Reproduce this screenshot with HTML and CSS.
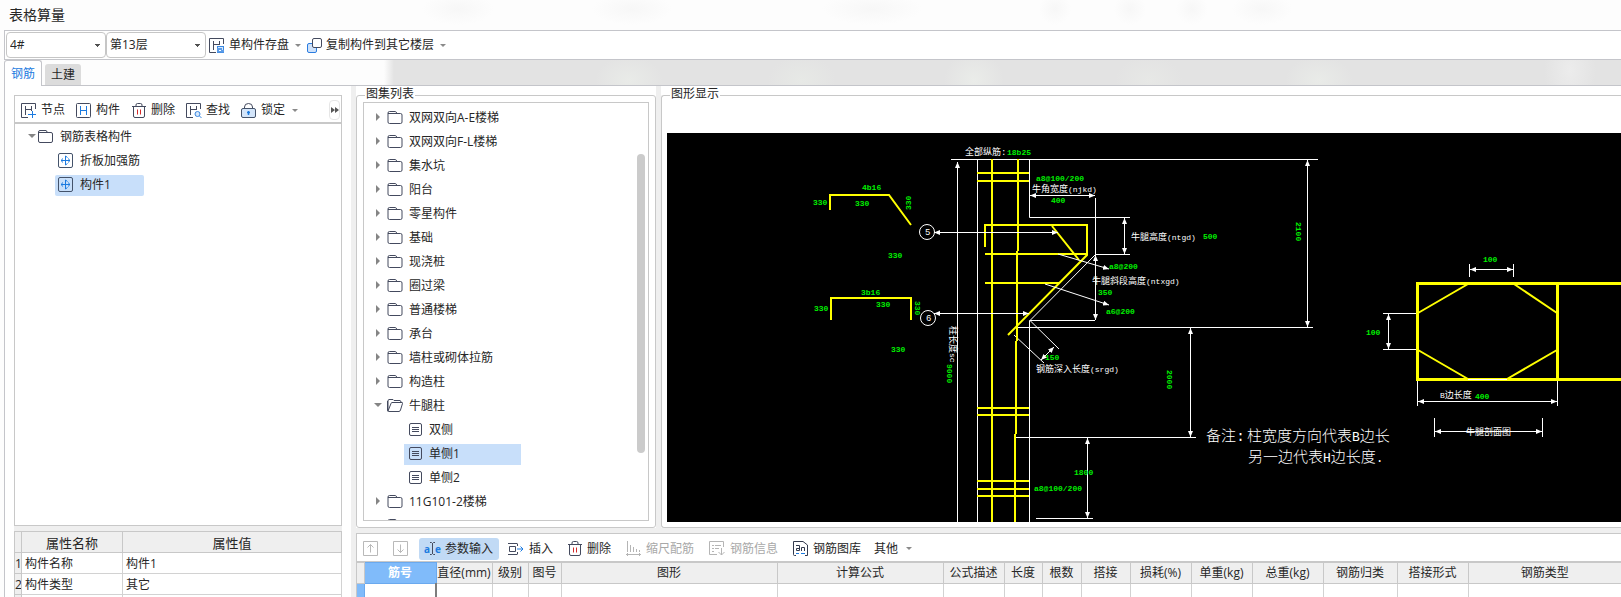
FILE: index.html
```html
<!DOCTYPE html>
<html lang="zh-CN">
<head>
<meta charset="utf-8">
<title>表格算量</title>
<link rel="stylesheet" href="styles.css">
</head>
<body>
<svg class="sprite" aria-hidden="true">
  <symbol id="i-folder" viewBox="0 0 15 13"><path d="M.5 11V2Q.5.5 2 .5H8Q9 .5 9 2.500M.5 2.500H13Q14.500 2.500 14.500 4V11Q14.500 12.500 13 12.500H2Q.5 12.500.5 11" fill="none" stroke="#444a5e"/></symbol>
  <symbol id="i-open" viewBox="0 0 16 13"><path d="M1 12V2Q1 .5 2 .5H6L7 1.500H13Q14 1.500 14 3.500M1 12 4 4.500Q4.300 3.500 5 3.500H15Q16 3.500 15.500 4.500L13.500 11Q13 12.500 12 12.500H1.500Q.5 12.500.5 11.500V2" fill="none" stroke="#444a5e"/></symbol>
  <symbol id="i-doc" viewBox="0 0 13 13"><rect x=".5" y=".5" width="12" height="12" rx="1.500" fill="none" stroke="#444a5e"/><path d="M3 4.500H10M3 6.500H10M3 8.500H10" stroke="#444a5e"/></symbol>
  <symbol id="i-part" viewBox="0 0 15 15"><rect x=".5" y=".5" width="14" height="14" rx="1.500" fill="none" stroke="#44536b"/><path d="M7.500 3V12M3 7.500H12M4.500 5.500Q2.500 7.500 4.500 9.500M10.500 5.500Q12.500 7.500 10.500 9.500M7.500 3 9.500 4.500M7.500 12 9.500 10.500" fill="none" stroke="#1c7be0"/></symbol>
  <symbol id="i-node" viewBox="0 0 16 15"><path d="M14.500 6V.5H.5V14.500H7M4.500 3V12M4.500 6.500H10.500M10.500 3V8" fill="none" stroke="#444a5e"/><path d="M7 11.500H15M11.500 8V15" stroke="#1c7be0"/></symbol>
  <symbol id="i-beam" viewBox="0 0 16 15"><rect x=".5" y=".5" width="14" height="14" rx="1" fill="none" stroke="#444a5e"/><path d="M4.500 3V12M10.500 3V12M4.500 7.500H10.500" stroke="#1c7be0"/></symbol>
  <symbol id="i-trash" viewBox="0 0 14 15"><path d="M0 3.500H14M1.500 3.500V13Q1.500 14.500 3 14.500H11Q12.500 14.500 12.500 13V3.500M4 3.500V2Q4 .5 5.500 .5H8.500Q10 .5 10 2V3.500" fill="none" stroke="#444a5e"/><path d="M5.500 6.500V11.500M8.500 6.500V11.500" stroke="#d42a2a"/></symbol>
  <symbol id="i-find" viewBox="0 0 16 15"><path d="M14.500 6V.5H.5V14.500H7M4.500 3V12M4.500 6.500H10.500M10.500 3V7" fill="none" stroke="#444a5e"/><circle cx="11.500" cy="11" r="2.500" fill="#d6e8fb" stroke="#3a87e0"/><path d="M13.500 13 15.500 15" stroke="#3a87e0"/></symbol>
  <symbol id="i-lock" viewBox="0 0 16 15"><path d="M3.500 6V4Q3.500 .5 7.500 .5T11.500 4V6" fill="none" stroke="#444a5e"/><rect x=".5" y="5.500" width="14" height="9" rx="1.500" fill="#d3e5fa" stroke="#44536b"/><path d="M7.500 8V12M6 9.500H9" stroke="#1c7be0" stroke-width="1.500"/></symbol>
  <symbol id="i-save" viewBox="0 0 16 15"><path d="M14.500 6V.5H.5V14.500H7M4.500 3V12M4.500 6.500H10.500M10.500 3V7" fill="none" stroke="#444a5e"/><rect x="8.500" y="8.500" width="6" height="6" fill="#d6e8fb" stroke="#3a87e0"/><path d="M8 14.500H15V12H13V10H8Z" fill="#5b9ce8"/><path d="M10 12.500H12" stroke="#fff"/></symbol>
  <symbol id="i-copy" viewBox="0 0 15 15"><rect x=".5" y="5.500" width="9" height="9" rx="1.500" fill="#cfe2fa" stroke="#2b7de0"/><rect x="5.500" y=".5" width="9" height="9" rx="1.500" fill="#fff" stroke="#444a5e"/></symbol>
  <symbol id="i-up" viewBox="0 0 15 15"><path d="M.5.5H14.500V14.500H.5ZM7.500 3.500V11.500M4.500 6.500 7.500 3.500 10.500 6.500" fill="none" stroke="#b9b9b9"/></symbol>
  <symbol id="i-down" viewBox="0 0 15 15"><path d="M.5.5H14.500V14.500H.5ZM7.500 3.500V11.500M4.500 8.500 7.500 11.500 10.500 8.500" fill="none" stroke="#b9b9b9"/></symbol>
  <symbol id="i-caret" viewBox="0 0 5 13"><path d="M0 .5H1.500L2.500 1.500 3.500 .5H5M0 12.500H1.500L2.500 11.500 3.500 12.500H5M2.500 1V12" fill="none" stroke="#444a5e"/></symbol>
  <symbol id="i-insert" viewBox="0 0 16 12"><path d="M0 .5H9M0 11.500H9M1.500 3.500H7.500V8.500H1.500ZM9.500 .5V3M9.500 9V11.500" fill="none" stroke="#444a5e"/><path d="M9 6H15M12.500 3.500 15 6 12.500 8.500" fill="none" stroke="#1c7be0"/></symbol>
  <symbol id="i-scale" viewBox="0 0 15 15"><path d="M1.500 0V11M4.500 4V11M7.500 6V11M10.500 8V11M13.500 9V11M0 13.500H15M1.500 12V15M13.500 12V15" stroke="#b5b5b5"/></symbol>
  <symbol id="i-info" viewBox="0 0 16 15"><path d="M14.500 6V.5H.5V13.500H8M3 4.500H5M6 4.500H12M3 7.500H5M6 7.500H10M3 10.500H5M12.500 7V14M9.500 11 12.500 14 15.500 11" fill="none" stroke="#b5b5b5"/></symbol>
  <symbol id="i-lib" viewBox="0 0 15 15"><path d="M3 14.500H1.500Q.5 14.500 .5 13.500V.5H10L14.500 4V14.500H12" fill="none" stroke="#333a4e"/><path d="M3 4.500H6.500V9.500H3.500V7.500H6.500M8.500 10V6.500H11.500V10" fill="none" stroke="#333a4e"/><path d="M3 12.500H6M8 12.500H12" stroke="#1c7be0"/></symbol>
</svg>

<header class="titlebar"><h1>表格算量</h1></header>

<div class="topbar">
  <select class="combo" aria-label="楼栋"><option>4#</option></select>
  <select class="combo" aria-label="楼层"><option>第13层</option></select>
  <button class="tool more"><svg width="16" height="15"><use href="#i-save"/></svg>单构件存盘</button>
  <button class="tool more"><svg width="15" height="15"><use href="#i-copy"/></svg>复制构件到其它楼层</button>
</div>

<nav class="tabs">
  <button class="tab active">钢筋</button>
  <button class="tab">土建</button>
</nav>

<main class="main">
  <aside class="left">
    <section class="parts">
      <div class="parts-bar">
        <button class="tool"><svg width="16" height="15"><use href="#i-node"/></svg>节点</button>
        <button class="tool"><svg width="16" height="15"><use href="#i-beam"/></svg>构件</button>
        <button class="tool"><svg width="16" height="15"><use href="#i-trash"/></svg>删除</button>
        <button class="tool"><svg width="16" height="15"><use href="#i-find"/></svg>查找</button>
        <button class="tool more"><svg width="16" height="15"><use href="#i-lock"/></svg>锁定</button>
        <button class="overflow" aria-label="更多"><svg width="8" height="6"><path d="M0 0 4 3 0 6ZM4 0 8 3 4 6Z" fill="#555"/></svg></button>
      </div>
      <ul class="tree parts-tree">
        <li><i class="arrow open"></i><svg width="15" height="13"><use href="#i-folder"/></svg>钢筋表格构件</li>
        <li class="child"><span class="node"><svg width="15" height="15"><use href="#i-part"/></svg>折板加强筋</span></li>
        <li class="child"><span class="node selected"><svg width="15" height="15"><use href="#i-part"/></svg>构件1</span></li>
      </ul>
    </section>
    <div class="props">
      <table class="grid props-grid">
        <colgroup><col class="w-num"><col class="w-name"><col></colgroup>
        <thead><tr><th></th><th>属性名称</th><th>属性值</th></tr></thead>
        <tbody>
          <tr><th>1</th><td>构件名称</td><td>构件1</td></tr>
          <tr><th>2</th><td>构件类型</td><td>其它</td></tr>
          <tr><th></th><td></td><td></td></tr>
        </tbody>
      </table>
    </div>
  </aside>

  <div class="right">
    <div class="upper">
      <section class="group atlas">
        <h2>图集列表</h2>
        <ul class="tree atlas-tree">
          <li><i class="arrow"></i><svg width="15" height="13"><use href="#i-folder"/></svg>双网双向A-E楼梯</li>
          <li><i class="arrow"></i><svg width="15" height="13"><use href="#i-folder"/></svg>双网双向F-L楼梯</li>
          <li><i class="arrow"></i><svg width="15" height="13"><use href="#i-folder"/></svg>集水坑</li>
          <li><i class="arrow"></i><svg width="15" height="13"><use href="#i-folder"/></svg>阳台</li>
          <li><i class="arrow"></i><svg width="15" height="13"><use href="#i-folder"/></svg>零星构件</li>
          <li><i class="arrow"></i><svg width="15" height="13"><use href="#i-folder"/></svg>基础</li>
          <li><i class="arrow"></i><svg width="15" height="13"><use href="#i-folder"/></svg>现浇桩</li>
          <li><i class="arrow"></i><svg width="15" height="13"><use href="#i-folder"/></svg>圈过梁</li>
          <li><i class="arrow"></i><svg width="15" height="13"><use href="#i-folder"/></svg>普通楼梯</li>
          <li><i class="arrow"></i><svg width="15" height="13"><use href="#i-folder"/></svg>承台</li>
          <li><i class="arrow"></i><svg width="15" height="13"><use href="#i-folder"/></svg>墙柱或砌体拉筋</li>
          <li><i class="arrow"></i><svg width="15" height="13"><use href="#i-folder"/></svg>构造柱</li>
          <li><i class="arrow open"></i><svg width="16" height="13"><use href="#i-open"/></svg>牛腿柱</li>
          <li class="child"><span class="node"><svg width="13" height="13"><use href="#i-doc"/></svg>双侧</span></li>
          <li class="child"><span class="node selected"><svg width="13" height="13"><use href="#i-doc"/></svg>单侧1</span></li>
          <li class="child"><span class="node"><svg width="13" height="13"><use href="#i-doc"/></svg>单侧2</span></li>
          <li><i class="arrow"></i><svg width="15" height="13"><use href="#i-folder"/></svg>11G101-2楼梯</li>
          <li><i class="arrow"></i><svg width="15" height="13"><use href="#i-folder"/></svg></li>
        </ul>
        <div class="thumb"></div>
      </section>

      <section class="group view">
        <h2>图形显示</h2>
        <div class="canvas">
          <svg class="drawing" width="100%" height="100%">
            <defs>
              <marker id="a" viewBox="0 0 6 5" refX="6" refY="2.500" markerWidth="6" markerHeight="5" markerUnits="userSpaceOnUse" orient="auto-start-reverse"><path d="M0 0 6 2.500 0 5Z" fill="#fff"/></marker>
            </defs>
            <g transform="translate(-667 -133)">
              <g class="white">
                <path d="M951 159.500H1318M977.500 159V522M1029.500 159V217.500H1130M1029.500 522V320.500H1095M1095.500 198V320M1095 254.500H1130M1018 327.500H1313M1016 437.500H1196M1036 518.500H1093"/>
                <path d="M1469.500 264V277M1513.500 264V277M1383 313.500H1417M1383 349.500H1417M1417.500 380V406M1557.500 380V406M1434.500 418V437M1542.500 418V437"/>
                <path class="thin" d="M1095 255 1030 320.500 1059 349M1014 335 1044 363"/>
                <circle cx="927" cy="232" r="7.500"/><circle cx="928" cy="318" r="7.500"/>
              </g>
              <g class="yellow">
                <path d="M992 159V522M1018 159V251M1017 251V341M1016 341V434M1015 434V522M977 173H1029M977 181H1029M977 408H1029M977 415H1029M977 481H1029M977 489H1029M977 496H1029"/>
                <path d="M985 247V225H1087V255L1008 335M1052 226 1079 260M985 254H1087M985 283H1060M830 210V195H889L911 225M831 320V298H911V320"/>
                <path d="M1418 313 1468 284M1514 284 1557 313M1418 350 1468 379M1507 379 1557 350"/>
                <path class="thick" d="M1621 283.500H1417.500V379.500H1621M1557.500 283.500V379.500"/>
              </g>
              <g class="white">
                <path d="M1468 379.500H1507"/>
                <path class="start" d="M957.500 162V522"/>
                <g class="dim">
                  <path d="M1030 195.500H1095"/><path d="M1124.500 218V254"/><path d="M1095.500 255V320"/>
                  <path d="M1307.500 160V327"/><path d="M1190.500 328V437"/><path d="M1087.500 438V518"/>
                  <path d="M934 232.500H1058"/><path d="M934 313.500H1029"/><path d="M1054 347 1041 360"/>
                  <path d="M1470 269.500H1513"/><path d="M1388.500 314V349"/><path d="M1418 401.500H1557"/><path d="M1435 431.500H1542"/>
                </g>
                <path class="end" d="M1058 254 1109 269"/><path class="end" d="M1045 284 1109 305"/>
              </g>
              <g class="val">
                <text x="1007" y="155">18b25</text><text x="1036" y="181">a8@100/200</text><text x="1051" y="203">400</text>
                <text x="1203" y="239">500</text><text x="1109" y="269">a8@200</text><text x="1098" y="295">350</text>
                <text x="1106" y="314">a6@200</text><text x="1045" y="360">150</text><text x="1074" y="475">1800</text>
                <text x="1034" y="491">a8@100/200</text>
                <text x="862" y="190">4b16</text><text x="813" y="205">330</text><text x="855" y="206">330</text><text x="888" y="258">330</text>
                <text x="861" y="295">3b16</text><text x="814" y="311">330</text><text x="876" y="307">330</text><text x="891" y="352">330</text>
                <text x="1483" y="262">100</text><text x="1366" y="335">100</text><text x="1475" y="399">400</text>
                <text transform="translate(911 210) rotate(-90)">330</text>
                <text transform="translate(915 301) rotate(90)">330</text>
                <text transform="translate(1296 222) rotate(90)">2100</text>
                <text transform="translate(1167 370) rotate(90)">2000</text>
                <text transform="translate(947 364) rotate(90)">9000</text>
              </g>
              <g class="cap">
                <text x="965" y="155">全部纵筋:</text><text x="1032" y="192">牛角宽度<tspan>(njkd)</tspan></text><text x="1131" y="240">牛腿高度<tspan>(ntgd)</tspan></text>
                <text x="1092" y="284">牛腿斜段高度<tspan>(ntxgd)</tspan></text><text x="1036" y="372">钢筋深入长度<tspan>(srgd)</tspan></text>
                <text x="1440" y="398"><tspan>B</tspan>边长度</text><text x="1466" y="435">牛腿剖面图</text>
                <text x="925" y="235">5</text><text x="926" y="321">6</text>
                <text transform="translate(950 326) rotate(90)">柱长度<tspan>sc</tspan></text>
              </g>
              <g class="note">
                <text x="1206" y="441">备注:</text><text x="1247" y="441">柱宽度方向代表<tspan>B</tspan>边长</text><text x="1248" y="462">另一边代表<tspan>H</tspan>边长度<tspan>.</tspan></text>
              </g>
            </g>
          </svg>
        </div>
      </section>
    </div>

    <section class="bars">
      <div class="bars-bar">
        <button class="tool" aria-label="上移" disabled><svg width="15" height="15"><use href="#i-up"/></svg></button>
        <button class="tool" aria-label="下移" disabled><svg width="15" height="15"><use href="#i-down"/></svg></button>
        <button class="tool pressed"><span class="ae">a<svg width="5" height="13"><use href="#i-caret"/></svg>e</span>参数输入</button>
        <button class="tool"><svg width="16" height="12"><use href="#i-insert"/></svg>插入</button>
        <button class="tool"><svg width="14" height="15"><use href="#i-trash"/></svg>删除</button>
        <button class="tool" disabled><svg width="15" height="15"><use href="#i-scale"/></svg>缩尺配筋</button>
        <button class="tool" disabled><svg width="16" height="15"><use href="#i-info"/></svg>钢筋信息</button>
        <button class="tool"><svg width="15" height="15"><use href="#i-lib"/></svg>钢筋图库</button>
        <button class="tool more">其他</button>
      </div>
      <table class="grid bars-grid">
        <colgroup><col class="c7"><col class="c72"><col class="c56"><col class="c36"><col class="c33"><col class="c216"><col class="c166"><col class="c61"><col class="c38"><col class="c39"><col class="c49"><col class="c61"><col class="c61"><col class="c71"><col class="c74"><col class="c71"><col></colgroup>
        <thead><tr><th></th><th class="current">筋号</th><th>直径(mm)</th><th>级别</th><th>图号</th><th>图形</th><th>计算公式</th><th>公式描述</th><th>长度</th><th>根数</th><th>搭接</th><th>损耗(%)</th><th>单重(kg)</th><th>总重(kg)</th><th>钢筋归类</th><th>搭接形式</th><th>钢筋类型</th></tr></thead>
        <tbody><tr><th class="current"></th><td class="focus"></td><td></td><td></td><td></td><td></td><td></td><td></td><td></td><td></td><td></td><td></td><td></td><td></td><td></td><td></td><td></td></tr></tbody>
      </table>
    </section>
  </div>
</main>
</body>
</html>
```
FILE: styles.css
```css
* { box-sizing: border-box; }

body {
  margin: 0;
  height: 100vh;
  display: flex;
  flex-direction: column;
  overflow: hidden;
  background: #fdfdfd;
  color: #262626;
  font: 12px/18px "Open Sans", "Noto Sans CJK SC", sans-serif;
}

h1, h2, ul { margin: 0; padding: 0; font-weight: 400; list-style: none; }
button, select { font: inherit; color: inherit; }
svg { flex: none; }
.sprite { position: absolute; width: 0; height: 0; }

.titlebar {
  flex: none;
  height: 30px;
  padding: 5px 9px;
  background:
    radial-gradient(36px 16px at 458px 9px, #f7f7f7, transparent),
    radial-gradient(40px 16px at 632px 9px, #f7f7f7, transparent),
    radial-gradient(50px 16px at 872px 9px, #f7f7f7, transparent),
    radial-gradient(16px 16px at 1055px 9px, #f7f7f7, transparent),
    radial-gradient(16px 16px at 1130px 9px, #f7f7f7, transparent),
    radial-gradient(16px 16px at 1192px 9px, #f7f7f7, transparent),
    radial-gradient(30px 16px at 1262px 9px, #f7f7f7, transparent),
    #fdfdfd;
}
.titlebar h1 { font-size: 14px; line-height: 20px; }

/* toolbars */
.topbar {
  flex: none;
  display: flex;
  align-items: center;
  height: 30px;
  margin-left: 4px;
  padding-left: 1px;
  background: #fff;
  border: solid #c4c5ca;
  border-width: 1px 0 1px 1px;
}
.combo {
  width: 100px;
  height: 26px;
  padding: 0 3px;
  appearance: none;
  border: 1px solid #c6c6c6;
  border-radius: 4px;
  background: linear-gradient(#505050, #505050) no-repeat right 5px top 11px / 5px 1px, linear-gradient(#505050, #505050) no-repeat right 6px top 12px / 3px 1px, linear-gradient(#505050, #505050) no-repeat right 7px top 13px / 1px 1px, #fff;
}
.tool {
  display: flex;
  align-items: center;
  gap: 5px;
  padding: 0;
  border: 0;
  background: none;
  white-space: nowrap;
}
.tool:disabled { color: #a8a8a8; }
.more::after {
  content: "";
  margin-left: 2px;
  border: solid transparent;
  border-width: 3px 3px 0;
  border-top-color: #8a8a8a;
}
.topbar .tool { margin-left: 3px; gap: 4px; }
.topbar .tool + .tool { margin-left: 6px; }

.tabs {
  flex: none;
  display: flex;
  align-items: flex-end;
  gap: 3px;
  height: 26px;
  margin-left: 4px;
  border-bottom: 1px solid #c4c5ca;
  background:
    linear-gradient(90deg, #fdfdfd 380px, transparent 390px),
    radial-gradient(34px 24px at 625px 20px, #e9ebe8, transparent),
    radial-gradient(34px 24px at 798px 20px, #e7e9e6, transparent),
    radial-gradient(30px 28px at 970px 20px, #eaece9, transparent),
    radial-gradient(34px 24px at 1145px 20px, #e7e8e6, transparent),
    radial-gradient(34px 24px at 1315px 20px, #e9ebe8, transparent),
    radial-gradient(26px 40px at 1566px 10px, #ececec, transparent),
    #e3e3e3;
}
.tab {
  width: 36px;
  height: 21px;
  padding: 0;
  border: 0;
  border-radius: 3px 3px 0 0;
  background: #dcdcdc;
}
.tab.active {
  width: 38px;
  height: 26px;
  margin-bottom: -1px;
  border: solid #c4c5ca;
  border-width: 1px 1px 0;
  background: #fff;
  color: #1c7be0;
}

.main {
  flex: 1;
  min-height: 0;
  display: grid;
  grid-template-columns: 346px minmax(0, 1fr);
  margin-left: 4px;
  border-left: 1px solid #c4c5ca;
  background: #fff;
}

/* left column */
.left {
  display: flex;
  flex-direction: column;
  min-height: 0;
  padding: 9px 9px 0;
}
.parts {
  flex: 1;
  min-height: 0;
  display: flex;
  flex-direction: column;
  border: 1px solid #c8c8c8;
}
.parts-bar {
  flex: none;
  display: flex;
  align-items: center;
  gap: 11px;
  height: 28px;
  padding: 2px 0 0 6px;
  border-bottom: 2px solid #c8c8c8;
}
.parts-bar .tool { gap: 4px; }
.parts-bar .more::after { margin-left: 3px; }
.overflow {
  display: flex;
  align-items: center;
  justify-content: center;
  width: 11px;
  height: 20px;
  margin-left: auto;
  margin-right: 1px;
  padding: 0;
  border: 1px solid #e6e6e6;
  border-radius: 4px;
  background: #fff;
}
.tree li { display: flex; align-items: center; height: 24px; }
.tree svg { margin-bottom: 2px; }
.arrow {
  width: 8px;
  margin-right: 3px;
  margin-bottom: 2px;
  flex: none;
}
.arrow::before {
  content: "";
  display: block;
  width: 0;
  border: solid transparent;
  border-width: 4px 0 4px 4px;
  border-left-color: #858585;
}
.arrow.open::before {
  margin-left: -2px;
  border-width: 4px 4px 0;
  border-color: #858585 transparent transparent;
}
.node { display: flex; align-items: center; height: 21px; }
.node.selected { background: #c8dffa; }
.parts-tree { padding: 1px 0 0 14px; }
.parts-tree .arrow { margin-right: 1px; }
.parts-tree .arrow.open::before { margin-left: -1px; }
.parts-tree li > svg { margin-right: 7px; }
.parts-tree .child { padding-left: 26px; }
.parts-tree .node { width: 89px; padding-left: 3px; gap: 7px; border-radius: 2px; }

.props {
  flex: none;
  height: 71px;
  padding-top: 5px;
  overflow: hidden;
  background: #efefef;
}

/* tables */
.grid {
  width: 100%;
  table-layout: fixed;
  border-collapse: collapse;
  background: #fff;
}
.grid th, .grid td {
  height: 21px;
  padding: 0;
  border: 1px solid #d2d2d2;
  font-weight: 400;
  line-height: 18px;
  white-space: nowrap;
  overflow: hidden;
}
.grid th { background: #efefef; border-color: #c8c8c8; }
.grid td { padding-left: 3px; text-align: left; }
.props-grid th, .props-grid td { padding-top: 1px; }
.props-grid thead th { font-size: 13px; }
.w-num { width: 7px; }
.w-name { width: 101px; }

/* right side */
.right {
  display: flex;
  flex-direction: column;
  min-width: 0;
  min-height: 0;
  padding-left: 5px;
  background: #efefef;
}
.upper {
  flex: 1;
  min-height: 0;
  display: grid;
  grid-template-columns: 300px minmax(0, 1fr);
  gap: 5px;
}
.group {
  position: relative;
  min-height: 0;
  display: flex;
  flex-direction: column;
  padding: 9px 0 0;
  background: #fff;
}
.group::before {
  content: "";
  position: absolute;
  inset: 9px 0 0;
  border: 1px solid #c8c8c8;
  border-radius: 3px;
}
.group h2 {
  position: absolute;
  left: 9px;
  top: 0;
  padding: 0 1px;
  background: #fff;
  font-size: 12px;
  line-height: 16px;
}
.view::before { border-right: 0; border-radius: 3px 0 0 3px; }
.atlas-tree {
  flex: 1;
  min-height: 0;
  margin: 7px;
  padding: 3px 0 0 12px;
  overflow: hidden;
  border: 1px solid #c8c8c8;
}
.atlas-tree li > svg { width: 16px; margin-right: 6px; }
.atlas-tree .child { padding-left: 28px; }
.atlas-tree .node { width: 117px; padding-left: 5px; gap: 7px; }
.thumb {
  position: absolute;
  right: 11px;
  top: 68px;
  bottom: 75px;
  width: 8px;
  border-radius: 4px;
  background: #cbcbcb;
}
.canvas {
  position: relative;
  flex: 1;
  min-height: 0;
  margin: 38px 0 6px 6px;
  background: #000;
  overflow: hidden;
}

/* drawing */
.drawing { display: block; position: absolute; inset: 0; }
.drawing .white { fill: none; stroke: #fff; }
.drawing .yellow { fill: none; stroke: #ff0; stroke-width: 2px; }
.drawing .yellow .thick { stroke-width: 3px; }
.dim path { marker-start: url(#a); marker-end: url(#a); }
.start { marker-start: url(#a); }
.end { marker-end: url(#a); }
.val { fill: #00f000; font: 700 8px "Liberation Mono", monospace; }
.cap { fill: #fff; font: 9px "Liberation Mono", "Noto Sans CJK SC", monospace; }
.cap tspan { font-size: 8px; }
.note { fill: #fff; font: 300 15px "Liberation Mono", "Noto Sans CJK SC", monospace; }
.note tspan { font-size: 13px; }

/* bottom panel */
.bars {
  flex: none;
  height: 64px;
  margin-top: 5px;
  overflow: hidden;
  border: solid #c8c8c8;
  border-width: 1px 0 0 1px;
  background: #fff;
}
.bars-bar {
  display: flex;
  align-items: center;
  gap: 15px;
  height: 28px;
  padding: 2px 0 0 6px;
  border-bottom: 1px solid #c8c8c8;
}
.pressed {
  height: 22px;
  margin: 0 -6px 0 -4px;
  padding: 0 6px 0 5px;
  gap: 4px;
  border-radius: 3px;
  background: #c1daf5;
}
.ae {
  display: flex;
  align-items: center;
  color: #1c7be0;
  font-size: 10px;
  font-weight: 700;
}
.bars-bar .more { margin-left: -2px; }
.bars-bar .more::after { margin-left: 3px; }
.bars-grid tr > :first-child { border-left: 0; }
.bars-grid tr > :last-child { border-right: 0; }
.bars-grid th.current {
  background: #80bbfa;
  border-color: #6aa9ee;
  color: #fff;
  font-weight: 700;
}
.bars-grid td.focus { border-right: 2px solid #7d7d7d; }
.c7 { width: 7px; }
.c33 { width: 33px; }
.c36 { width: 36px; }
.c38 { width: 38px; }
.c39 { width: 39px; }
.c49 { width: 49px; }
.c56 { width: 56px; }
.c61 { width: 61px; }
.c71 { width: 71px; }
.c72 { width: 72px; }
.c74 { width: 74px; }
.c166 { width: 166px; }
.c216 { width: 216px; }
```
